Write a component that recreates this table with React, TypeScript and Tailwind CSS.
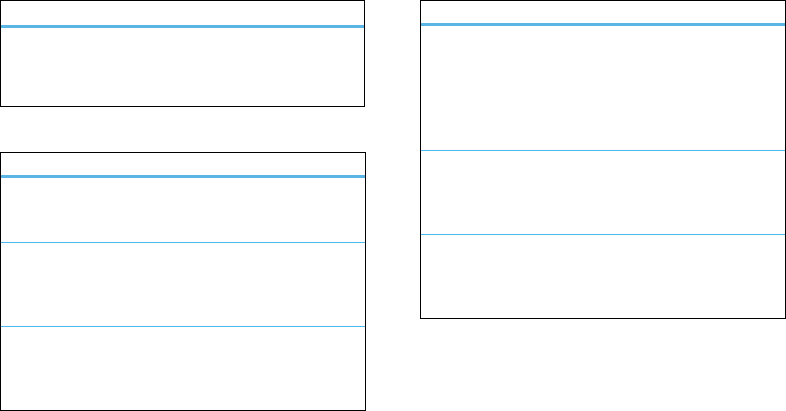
type TableBox = {
    width: string;
    height: string;
    head: string;
    rows: string[];
};

function Box({ width, height, head, rows }: TableBox) {
    return (
        <div className={`${width} ${height} flex flex-col border border-black bg-white`}>
            <div className={`${head} shrink-0 border-b-[3px] border-[#5ab4e4]`} />
            {rows.map((r, i) => (
                <div key={i} className={`${r} shrink-0 border-b border-[#4ab9ee]`} />
            ))}
            <div className="flex-1" />
        </div>
    );
}

export default function App() {
    return (
        <div className="w-[786px] h-[411px] bg-white overflow-hidden flex items-start font-['Liberation_Sans',sans-serif]">
            <div className="w-[366px] flex flex-col">
                <div className="w-[365px] h-[107px] flex flex-col border border-black">
                    <div className="h-[27px] shrink-0 border-b-[3px] border-[#5ab4e4]" />
                    <div className="flex-1" />
                </div>
                <div className="mt-[45px]">
                    <Box
                        width="w-[366px]"
                        height="h-[259px]"
                        head="h-[25px]"
                        rows={["h-[65px]", "h-[84px]"]}
                    />
                </div>
            </div>
            <div className="ml-[54px]">
                <Box
                    width="w-[366px]"
                    height="h-[319px]"
                    head="h-[25px]"
                    rows={["h-[125px]", "h-[84px]"]}
                />
            </div>
        </div>
    );
}
